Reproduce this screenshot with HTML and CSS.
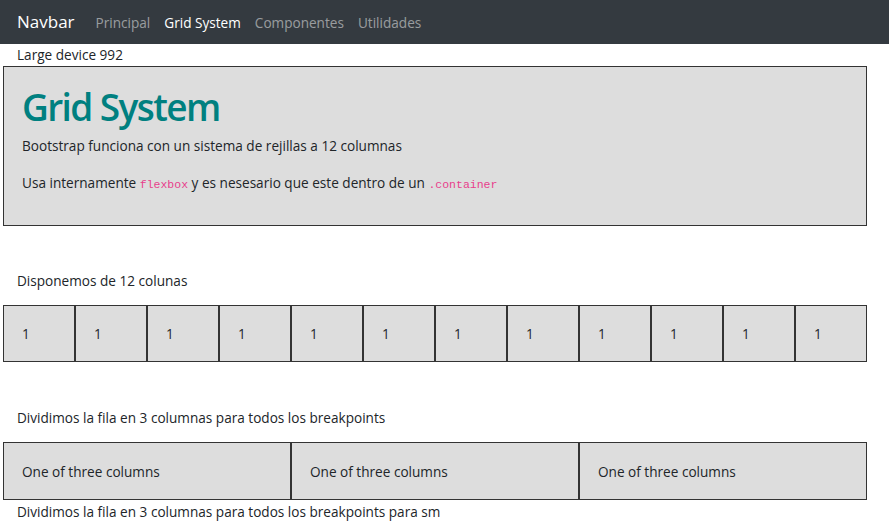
FILE: index.html
```html
<!DOCTYPE html>
<html lang="es">
<head>
<meta charset="utf-8">
<title>Grid System</title>
<link rel="stylesheet" href="styles.css">
</head>
<body>
<nav class="navbar">
  <a class="brand" href="#">Navbar</a>
  <ul class="nav">
    <li><a class="nav-link" href="#">Principal</a></li>
    <li><a class="nav-link active" href="#">Grid System</a></li>
    <li><a class="nav-link" href="#">Componentes</a></li>
    <li><a class="nav-link" href="#">Utilidades</a></li>
  </ul>
</nav>
<main class="container">
  <p class="label label-top">Large device 992</p>
  <section class="jumbotron">
    <h1 class="title">Grid System</h1>
    <p class="lead">Bootstrap funciona con un sistema de rejillas a 12 columnas</p>
    <p class="lead">Usa internamente <code>flexbox</code> y es nesesario que este dentro de un <code>.container</code></p>
  </section>
  <p class="label label-first">Disponemos de 12 colunas</p>
  <div class="row row-12">
    <div class="cell">1</div><div class="cell">1</div><div class="cell">1</div><div class="cell">1</div>
    <div class="cell">1</div><div class="cell">1</div><div class="cell">1</div><div class="cell">1</div>
    <div class="cell">1</div><div class="cell">1</div><div class="cell">1</div><div class="cell">1</div>
  </div>
  <p class="label label-second">Dividimos la fila en 3 columnas para todos los breakpoints</p>
  <div class="row row-3">
    <div class="cell cell-tall">One of three columns</div>
    <div class="cell cell-tall">One of three columns</div>
    <div class="cell cell-tall">One of three columns</div>
  </div>
  <p class="label label-last">Dividimos la fila en 3 columnas para todos los breakpoints para sm</p>
</main>
</body>
</html>
```
FILE: styles.css
```css
* { box-sizing: border-box; }
html, body { margin: 0; padding: 0; background: #fff; }
body {
  font-family: "Open Sans", "Noto Sans", sans-serif;
  font-size: 13.6px;
  line-height: 21px;
  color: #212529;
  width: 889px;
  height: 532px;
  overflow: hidden;
}

.navbar {
  height: 44px;
  background: #343a40;
  display: flex;
  align-items: center;
  padding-left: 17px;
}
.brand {
  color: #fff;
  text-decoration: none;
  font-size: 17px;
  line-height: 26px;
  margin-right: 14px;
}
.nav {
  list-style: none;
  margin: 0;
  padding: 0;
  display: flex;
}
.nav-link {
  display: block;
  padding: 0 7px;
  color: rgba(255,255,255,0.5);
  text-decoration: none;
  font-size: 13.6px;
  line-height: 21px;
}
.nav-link.active { color: #fff; }

.container {
  width: 864px;
  margin-left: 3px;
}

.label {
  margin: 0;
  padding-left: 14px;
}
.label-top { margin-bottom: 1px; }
.label-first { margin-top: 44px; margin-bottom: 14px; }
.label-second { margin-top: 45px; margin-bottom: 14px; }
.label-last { margin-top: 1px; }

.jumbotron {
  background: #ddd;
  border: 1px solid #333;
  padding: 16px 18px 14px;
}
.title {
  margin: 0 0 4px;
  font-size: 37px;
  line-height: 48px;
  font-weight: 600;
  letter-spacing: -1.6px;
  color: #008080;
}
.lead {
  margin: 0 0 16px;
}
code {
  font-family: "Liberation Mono", "DejaVu Sans Mono", monospace;
  font-size: 11.5px;
  color: #e83e8c;
}

.row {
  display: grid;
}
.row-12 { grid-template-columns: repeat(12, 1fr); }
.row-3 { grid-template-columns: repeat(3, 1fr); }

.cell {
  background: #ddd;
  border: 1px solid #333;
  padding: 17px 18px;
}
.cell-tall { padding-top: 18px; }
```
